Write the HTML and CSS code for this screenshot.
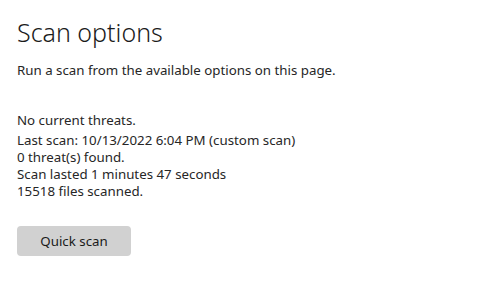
FILE: index.html
```html
<!DOCTYPE html>
<html lang="en">
<head>
  <meta charset="UTF-8">
  <title>Scan options</title>
  <link rel="stylesheet" href="styles.css">
</head>
<body>
<div class="page">
  <h1>Scan options</h1>
  <p class="intro">Run a scan from the available options on this page.</p>

  <div class="status">
    <p class="status-head">No current threats.</p>
    <p>Last scan: 10/13/2022 6:04 PM (custom scan)</p>
    <p>0 threat(s) found.</p>
    <p>Scan lasted 1 minutes 47 seconds</p>
    <p>15518 files scanned.</p>
  </div>

  <button class="btn" type="button">Quick scan</button>
</div>
</body>
</html>
```

FILE: styles.css
```css
body {
  font-family: "Noto Sans", "Open Sans", sans-serif;
  background-color: #fff;
  color: #262626;
  margin: 0;
}
.page {
  padding: 14px 17px;
}
h1 {
  font-size: 25px;
  font-weight: 300;
  margin: 0;
  line-height: 36px;
  color: #1b1b1b;
}
p {
  margin: 0;
}
.intro {
  font-size: 13.3px;
  margin-top: 11px;
  line-height: 18px;
}
.status {
  margin-top: 33px;
  font-size: 13.3px;
  line-height: 17px;
}
.status-head {
  margin-bottom: 3px;
}
.btn {
  margin-top: 26px;
  width: 114px;
  height: 30px;
  border: none;
  border-radius: 4px;
  background-color: #d1d1d1;
  font-family: inherit;
  font-size: 13.3px;
  color: #1a1a1a;
}
```
